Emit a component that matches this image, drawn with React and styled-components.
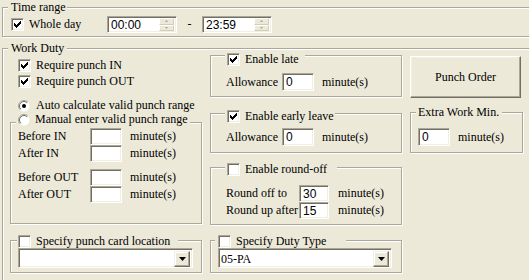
import React from 'react';
import styled, { createGlobalStyle } from 'styled-components';

// styles
const GlobalStyle = createGlobalStyle`
  html, body {
    margin: 0;
    padding: 0;
    background: #ece9d8;
    overflow: hidden;
  }
  body {
    font-family: "Liberation Serif", "Times New Roman", serif;
    font-size: 12px;
    color: #000;
  }
`;

const Page = styled.div`
  box-sizing: border-box;
  width: 529px;
  height: 280px;
  padding: 7px 0 0 2px;
  overflow: hidden;
`;

const Group = styled.div`
  position: relative;
  box-sizing: border-box;
  border: 1px solid #aca899;
  box-shadow: inset 1px 1px 0 #fff, 1px 1px 0 #fff;
  margin-top: ${props => props.$mt || 0}px;
  margin-right: ${props => props.$mr || 0}px;
  padding: ${props => props.$pad || '0'};
  width: ${props => (props.$w ? `${props.$w}px` : 'auto')};
  height: ${props => (props.$h ? `${props.$h}px` : 'auto')};
`;

const Caption = styled.div`
  position: absolute;
  top: ${props => props.$top}px;
  left: ${props => props.$left}px;
  width: ${props => props.$w}px;
  height: ${props => props.$h || 13}px;
  box-sizing: border-box;
  padding-left: ${props => props.$pl || 0}px;
  display: flex;
  align-items: center;
  gap: 5px;
  background: #ece9d8;
  line-height: ${props => props.$h || 13}px;
  white-space: nowrap;
`;

const Grid = styled.div`
  display: grid;
  grid-template-columns: 192px 192px 113px;
  column-gap: 8px;
`;

const Column = styled.div`
  display: flex;
  flex-direction: column;
`;

const Row = styled.div`
  display: flex;
  align-items: center;
  gap: ${props => props.$gap || 0}px;
  width: ${props => (props.$w ? `${props.$w}px` : 'auto')};
  height: ${props => props.$h || 13}px;
  margin-top: ${props => props.$mt || 0}px;
  padding-left: ${props => props.$pl || 0}px;
  line-height: ${props => props.$h || 13}px;
  white-space: nowrap;
`;

const FieldLabel = styled.span`
  width: ${props => props.$w}px;
  flex: none;
`;

const Unit = styled.span`
  margin-left: ${props => props.$ml || 8}px;
`;

const Sunken = styled.div`
  box-sizing: border-box;
  flex: none;
  background: #fff;
  border: 1px solid;
  border-color: #aca899 #fff #fff #aca899;
  box-shadow: inset 1px 1px 0 #716f64, inset -1px -1px 0 #f1efe2;
`;

const Box = styled(Sunken)`
  width: 13px;
  height: 13px;
  display: flex;
  align-items: center;
  justify-content: center;
`;

const Edit = styled(Sunken)`
  width: ${props => props.$w || 32}px;
  height: ${props => props.$h || 18}px;
  padding: 1px 0 0 3px;
  font-family: "Liberation Sans", Arial, sans-serif;
  font-size: 12px;
  line-height: ${props => (props.$h || 18) - 3}px;
`;

const TimeEdit = styled(Sunken)`
  display: flex;
  width: 70px;
  height: 17px;
  padding: 2px 2px 1px 3px;
  font-family: "Liberation Sans", Arial, sans-serif;
  font-size: 12px;
  line-height: 13px;
`;

const SpinStack = styled.div`
  display: flex;
  flex-direction: column;
  width: 15px;
  margin-left: auto;
  margin-top: -1px;
`;

const SpinButton = styled.div`
  flex: 1;
  box-sizing: border-box;
  background: #ece9d8;
  border: 1px solid;
  border-color: #fff #d0cdbd #d0cdbd #fff;
  display: flex;
  align-items: center;
  justify-content: center;
`;

const Dash = styled.span`
  width: 25px;
  text-align: center;
  flex: none;
`;

const Combo = styled(Sunken)`
  display: flex;
  width: ${props => props.$w}px;
  height: 20px;
  padding: 2px;
`;

const ComboValue = styled.span`
  flex: 1;
  line-height: 16px;
`;

const DropButton = styled.div`
  box-sizing: border-box;
  width: 16px;
  height: 16px;
  background: #ece9d8;
  border: 1px solid;
  border-color: #f1efe2 #716f64 #716f64 #f1efe2;
  box-shadow: inset -1px -1px 0 #aca899, inset 1px 1px 0 #fff;
  display: flex;
  align-items: center;
  justify-content: center;
`;

const PushButton = styled.div`
  box-sizing: border-box;
  width: 111px;
  height: 42px;
  margin-top: 7px;
  background: #ece9d8;
  border: 1px solid;
  border-color: #fff #716f64 #716f64 #fff;
  box-shadow: inset -1px -1px 0 #aca899, inset 1px 1px 0 #f1efe2;
  display: flex;
  align-items: center;
  justify-content: center;
`;

// parts
const Check = ({ checked }) => (
  <Box>
    {checked && (
      <svg width="7" height="7" viewBox="0 0 7 7" shapeRendering="crispEdges">
        <polygon points="0,2 2,4 6,0 7,0 7,2 2,7 0,5" fill="#000" />
      </svg>
    )}
  </Box>
);

const Radio = ({ checked }) => (
  <svg width="12" height="12" viewBox="0 0 12 12" style={{ flex: 'none' }}>
    <circle cx="6" cy="6" r="5.5" fill="#fff" />
    <path d="M2.1 9.9A5.5 5.5 0 0 1 9.9 2.1" fill="none" stroke="#aca899" />
    <path d="M2.8 9.2A4.5 4.5 0 0 1 9.2 2.8" fill="none" stroke="#716f64" />
    {checked && <circle cx="6" cy="6" r="2" fill="#000" />}
  </svg>
);

const DownArrow = () => (
  <svg width="7" height="4" viewBox="0 0 7 4">
    <path d="M0 0h7L3.5 4z" fill="#000" />
  </svg>
);

const TimeBox = ({ value }) => (
  <TimeEdit>
    <span>{value}</span>
    <SpinStack>
      <SpinButton>
        <svg width="3" height="2"><path d="M0 2h3L1.5 0z" fill="#aca899" /></svg>
      </SpinButton>
      <SpinButton>
        <svg width="3" height="2"><path d="M0 0h3L1.5 2z" fill="#aca899" /></svg>
      </SpinButton>
    </SpinStack>
  </TimeEdit>
);

const ComboBox = ({ width, value }) => (
  <Combo $w={width}>
    <ComboValue>{value}</ComboValue>
    <DropButton>
      <DownArrow />
    </DropButton>
  </Combo>
);

const EditRow = ({ label, labelWidth, value, editWidth, h = 18, mt, pl, unitGap }) => (
  <Row $h={h} $mt={mt} $pl={pl}>
    <FieldLabel $w={labelWidth}>{label}</FieldLabel>
    <Edit $w={editWidth} $h={h}>{value}</Edit>
    <Unit $ml={unitGap}>minute(s)</Unit>
  </Row>
);

// component
const App = () => (
  <Page>
    <GlobalStyle />
    <Group $pad="8px 0 3px 8px" $mr={-6}>
      <Caption $top={-8} $left={5} $w={59} $pl={3} $h={14}>Time range</Caption>
      <Row $h={17}>
        <Row $gap={5} $w={96}>
          <Check checked />
          <span>Whole day</span>
        </Row>
        <TimeBox value="00:00" />
        <Dash>-</Dash>
        <TimeBox value="23:59" />
      </Row>
    </Group>

    <Group $mt={11} $mr={-6} $pad="0 0 0 7px" $h={260}>
      <Caption $top={-8} $left={5} $w={59} $pl={3} $h={14}>Work Duty</Caption>
      <Grid>
        <Column>
          <Row $mt={10} $pl={8} $gap={5}>
            <Check checked />
            <span>Require punch IN</span>
          </Row>
          <Row $mt={3} $pl={8} $gap={5}>
            <Check checked />
            <span>Require punch OUT</span>
          </Row>
          <Row $mt={11} $pl={8} $gap={6}>
            <Radio checked />
            <span>Auto calculate valid punch range</span>
          </Row>

          <Group $mt={10} $w={192} $pad="5px 0 20px 7px">
            <Caption $top={-10} $left={5} $w={174} $pl={2}>
              <Radio />
              <span>Manual enter valid punch range</span>
            </Caption>
            <EditRow label="Before IN" labelWidth={72} h={17} />
            <EditRow label="After IN" labelWidth={72} h={17} />
            <EditRow label="Before OUT" labelWidth={72} h={17} mt={7} />
            <EditRow label="After OUT" labelWidth={72} h={17} />
          </Group>

          <Group $mt={16} $w={192} $pad="7px 0 4px 7px">
            <Caption $top={-6} $left={6} $w={161} $pl={1}>
              <Check />
              <span>Specify punch card location</span>
            </Caption>
            <ComboBox width={175} value="" />
          </Group>
        </Column>

        <Column>
          <Group $mt={6} $pad="17px 0 5px 15px">
            <Caption $top={-3} $left={14} $w={80} $pl={2}>
              <Check checked />
              <span>Enable late</span>
            </Caption>
            <EditRow label="Allowance" labelWidth={56} value="0" />
          </Group>

          <Group $mt={16} $pad="14px 0 6px 15px">
            <Caption $top={-4} $left={14} $w={110} $pl={2}>
              <Check checked />
              <span>Enable early leave</span>
            </Caption>
            <EditRow label="Allowance" labelWidth={56} value="0" />
          </Group>

          <Group $mt={14} $pad="17px 0 5px 15px">
            <Caption $top={-5} $left={14} $w={112} $pl={2}>
              <Check />
              <span>Enable round-off</span>
            </Caption>
            <EditRow label="Round off to" labelWidth={73} value="30" editWidth={30} h={17} unitGap={9} />
            <EditRow label="Round up after" labelWidth={73} value="15" editWidth={30} h={17} unitGap={9} />
          </Group>

          <Group $mt={15} $pad="7px 0 4px 7px">
            <Caption $top={-6} $left={4} $w={131} $pl={3}>
              <Check />
              <span>Specify Duty Type</span>
            </Caption>
            <ComboBox width={174} value="05-PA" />
          </Group>
        </Column>

        <Column>
          <PushButton>Punch Order</PushButton>
          <Group $mt={14} $pad="15px 0 6px 7px">
            <Caption $top={-8} $left={5} $w={86} $pl={2} $h={14}>Extra Work Min.</Caption>
            <EditRow labelWidth={0} value="0" />
          </Group>
        </Column>
      </Grid>
    </Group>
  </Page>
);

export default App;
